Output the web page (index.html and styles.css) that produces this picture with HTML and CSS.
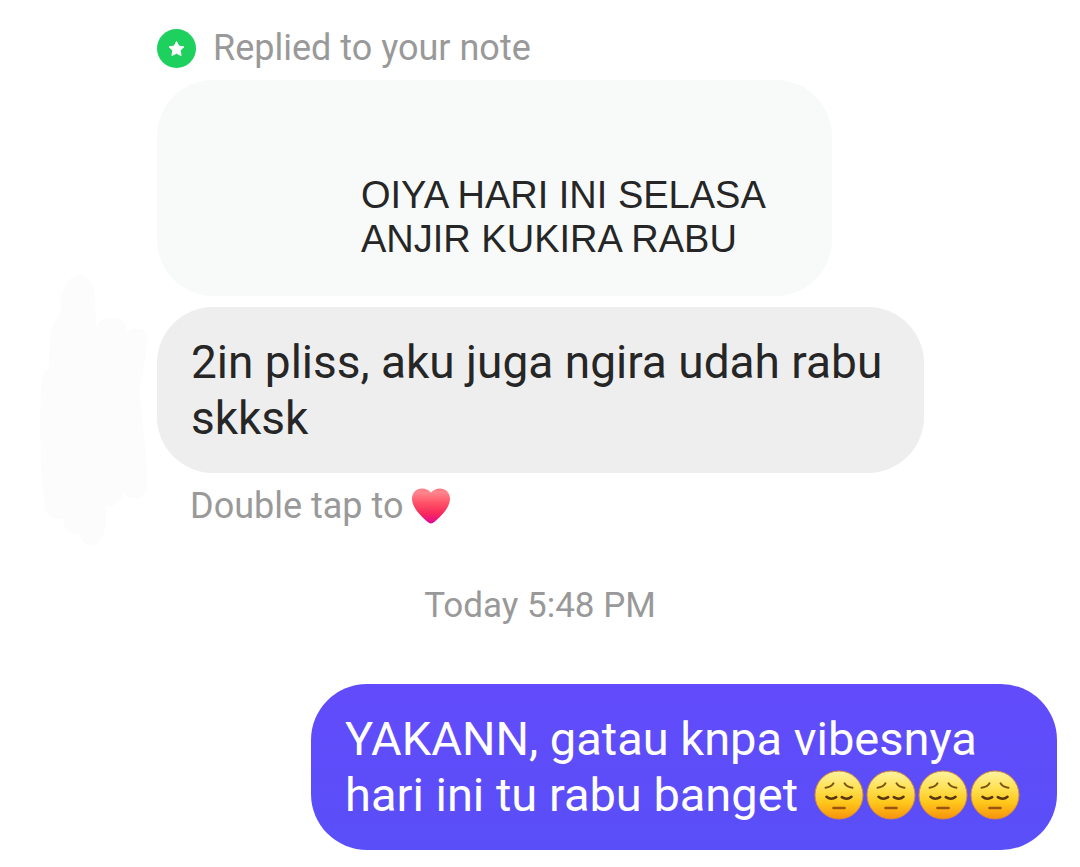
FILE: index.html
```
<!DOCTYPE html>
<html lang="id">
<head>
<meta charset="utf-8">
<meta name="viewport" content="width=device-width, initial-scale=1">
<title>Chat</title>
<link rel="stylesheet" href="styles.css">
</head>
<body>
<svg class="defs" aria-hidden="true">
  <defs>
    <linearGradient id="face-fill" x1="0" y1="0" x2="0" y2="1">
      <stop offset="0" stop-color="#fff3a0"/>
      <stop offset=".35" stop-color="#ffe256"/>
      <stop offset=".65" stop-color="#ffc81c"/>
      <stop offset="1" stop-color="#f7920c"/>
    </linearGradient>
    <linearGradient id="heart-fill" x1="0" y1="0" x2="0" y2="1">
      <stop offset="0" stop-color="#f97f88"/>
      <stop offset=".12" stop-color="#ff858c"/>
      <stop offset=".4" stop-color="#ff5468"/>
      <stop offset=".72" stop-color="#f9285c"/>
      <stop offset="1" stop-color="#e0079a"/>
    </linearGradient>
    <symbol id="pensive" viewBox="0 0 50 50">
      <circle cx="25" cy="25" r="24" fill="url(#face-fill)" stroke="#d58a3a" stroke-width="1"/>
      <g fill="none" stroke-linecap="round">
        <path d="M11.500 17.800Q17.500 17 19.500 13.300M38.500 17.800Q32.500 17 30.500 13.300" stroke="#7c5010" stroke-width="1.900"/>
        <path d="M12.500 26.800Q17 30.500 22.200 27.200M27.800 27.200Q33 30.500 37.500 26.800" stroke="#57350c" stroke-width="2.600"/>
        <path d="M19.500 38H30.500" stroke="#9a5410" stroke-width="2.600"/>
      </g>
    </symbol>
  </defs>
</svg>

<main class="chat">
  <section class="received">
    <div class="avatar">
      <svg viewBox="0 0 108 270" aria-hidden="true">
        <path d="M40 0C48 1 54 9 55 20L56 53C59 45 66 42 74 42C82 42 87 48 87 57C91 53 96 53 101 54C108 57 108 66 106 76L103 97Q98 112 101 130L107 190V210C107 219 103 223 96 223C90 224 86 221 84 217C82 227 76 232 66 231V246C64 263 60 270 51 270C44 270 41 265 39 258C31 258 24 257 23 244C14 245 7 242 5 234Q2 214 1 180Q-1 140 2 105C3 97 5 95 9 94L10 64C10 53 14 47 21 38C19 20 25 1 40 0Z"/>
      </svg>
    </div>
    <div class="thread">
      <p class="context">
        <svg class="badge" viewBox="0 0 39 39" aria-hidden="true">
          <circle cx="19.500" cy="19.500" r="19.500" fill="#1ed15f"/>
          <path d="M19.500 12.500L21.800 17.100L26.900 17.800L23.200 21.400L24.100 26.600L19.500 24.200L14.900 26.600L15.800 21.400L12.100 17.800L17.200 17.100Z" fill="#fff" stroke="#fff" stroke-linejoin="round"/>
        </svg>
        <span>Replied to your note</span>
      </p>
      <blockquote class="note">OIYA HARI INI SELASA<br>ANJIR KUKIRA RABU</blockquote>
      <p class="bubble bubble-in">2in pliss, aku juga ngira udah rabu skksk</p>
      <p class="hint">
        <span>Double tap to</span>
        <svg class="heart" viewBox="0 0 38 36" role="img" aria-label="heart">
          <path d="M19 35.500C16.500 35.500 12 31 7 25.500C2.500 20.500 0 15.500 0 10.800C0 4.500 4.500 .500 10 .500C14 .500 17.200 2.200 19 4.500C20.800 2.200 24 .500 28 .500C33.500 .500 38 4.500 38 10.800C38 15.500 35.500 20.500 31 25.500C26 31 21.500 35.500 19 35.500Z" fill="url(#heart-fill)"/>
        </svg>
      </p>
    </div>
  </section>

  <time class="stamp" datetime="17:48">Today 5:48 PM</time>

  <p class="bubble bubble-out">YAKANN, gatau knpa vibesnya hari ini tu rabu banget <span class="faces" role="img" aria-label="four pensive faces"><svg><use href="#pensive"/></svg><svg><use href="#pensive"/></svg><svg><use href="#pensive"/></svg><svg><use href="#pensive"/></svg></span></p>
</main>
</body>
</html>
```
FILE: styles.css
```
* {
  box-sizing: border-box;
}

body {
  margin: 0;
  background: #fff;
  color: #262626;
  font-family: Roboto, "Liberation Sans", sans-serif;
}

p,
blockquote {
  margin: 0;
}

.defs {
  position: absolute;
  width: 0;
  height: 0;
}

.chat {
  display: flex;
  flex-direction: column;
  padding: 26px 0 17px;
}

.received {
  display: flex;
  gap: 9px;
  padding: 0 23px 0 40px;
}

.avatar {
  flex: none;
  align-self: flex-end;
  width: 108px;
}

.avatar svg {
  display: block;
  width: 100%;
  fill: #fcfcfc;
}

.thread {
  flex: 1;
  display: flex;
  flex-direction: column;
  align-items: flex-start;
  padding-bottom: 17px;
}

.context,
.hint,
.stamp {
  color: #999;
  font-size: 36px;
  line-height: 44px;
}

.context {
  display: flex;
  align-items: center;
  gap: 17px;
  margin-bottom: 10px;
}

.badge {
  width: 39px;
  height: 39px;
}

.note {
  width: 75%;
  padding: 93px 34px 35px 204px;
  border-radius: 56px;
  background: #f8faf9;
  font-family: "Liberation Sans", sans-serif;
  font-size: 38px;
  line-height: 44px;
  white-space: nowrap;
}

.bubble {
  padding: 27px 24px 27px 34px;
  border-radius: 56px;
  font-size: 47px;
  line-height: 56px;
}

.bubble-in {
  max-width: 767px;
  margin: 11px 0;
  background: #eee;
  font-size: 46px;
}

.hint {
  display: flex;
  align-items: center;
  gap: 9px;
  padding-left: 33px;
}

.heart {
  width: 38px;
  height: 36px;
}

.stamp {
  align-self: center;
  margin: 39px 0 56px;
  font-size: 35px;
}

.bubble-out {
  align-self: flex-end;
  max-width: 746px;
  margin-right: 23px;
  background: linear-gradient(#624bfb, #594ff8);
  color: #fff;
}

.faces {
  display: inline-flex;
  align-items: center;
  gap: 2px;
  height: 56px;
  margin-left: 4px;
  vertical-align: top;
}

.faces svg {
  width: 50px;
  height: 50px;
}
```
